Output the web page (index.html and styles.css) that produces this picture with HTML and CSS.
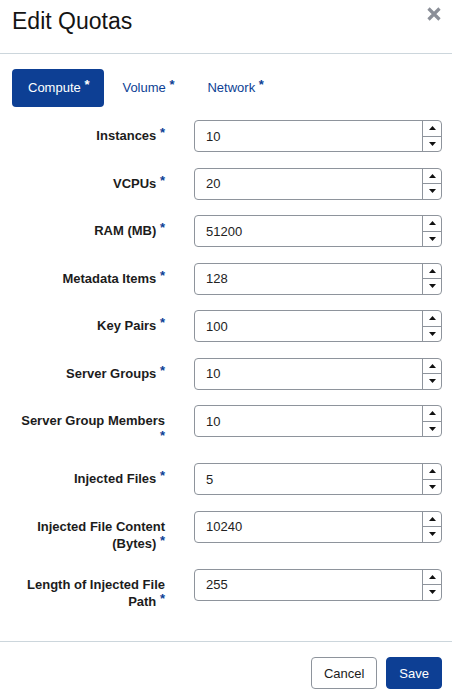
FILE: index.html
```html
<!DOCTYPE html>
<html>
<head>
<meta charset="utf-8">
<link rel="stylesheet" href="styles.css">
</head>
<body>
<div class="modal">
  <div class="header">
    <h1 class="title">Edit Quotas</h1>
    <svg class="close" width="14" height="14" viewBox="0 0 14 14"><path d="M1.5 1.5 L12.5 12.5 M12.5 1.5 L1.5 12.5" stroke="#8b8f98" stroke-width="3.2" fill="none"/></svg>
  </div>
  <div class="body">
    <div class="tabs">
      <div class="tab active">Compute <span class="req">*</span></div>
      <div class="tab">Volume <span class="req">*</span></div>
      <div class="tab">Network <span class="req">*</span></div>
    </div>
    <div class="form">
      <div class="label">Instances <span class="req">*</span></div>
      <div class="field"><span class="val">10</span><span class="spin"><span class="up"><svg width="7" height="4"><polygon points="0,4 7,4 3.5,0"/></svg></span><span class="down"><svg width="7" height="4"><polygon points="0,0 7,0 3.5,4"/></svg></span></span></div>

      <div class="label">VCPUs <span class="req">*</span></div>
      <div class="field"><span class="val">20</span><span class="spin"><span class="up"><svg width="7" height="4"><polygon points="0,4 7,4 3.5,0"/></svg></span><span class="down"><svg width="7" height="4"><polygon points="0,0 7,0 3.5,4"/></svg></span></span></div>

      <div class="label">RAM (MB) <span class="req">*</span></div>
      <div class="field"><span class="val">51200</span><span class="spin"><span class="up"><svg width="7" height="4"><polygon points="0,4 7,4 3.5,0"/></svg></span><span class="down"><svg width="7" height="4"><polygon points="0,0 7,0 3.5,4"/></svg></span></span></div>

      <div class="label">Metadata Items <span class="req">*</span></div>
      <div class="field"><span class="val">128</span><span class="spin"><span class="up"><svg width="7" height="4"><polygon points="0,4 7,4 3.5,0"/></svg></span><span class="down"><svg width="7" height="4"><polygon points="0,0 7,0 3.5,4"/></svg></span></span></div>

      <div class="label">Key Pairs <span class="req">*</span></div>
      <div class="field"><span class="val">100</span><span class="spin"><span class="up"><svg width="7" height="4"><polygon points="0,4 7,4 3.5,0"/></svg></span><span class="down"><svg width="7" height="4"><polygon points="0,0 7,0 3.5,4"/></svg></span></span></div>

      <div class="label">Server Groups <span class="req">*</span></div>
      <div class="field"><span class="val">10</span><span class="spin"><span class="up"><svg width="7" height="4"><polygon points="0,4 7,4 3.5,0"/></svg></span><span class="down"><svg width="7" height="4"><polygon points="0,0 7,0 3.5,4"/></svg></span></span></div>

      <div class="label">Server Group Members <span class="req">*</span></div>
      <div class="field"><span class="val">10</span><span class="spin"><span class="up"><svg width="7" height="4"><polygon points="0,4 7,4 3.5,0"/></svg></span><span class="down"><svg width="7" height="4"><polygon points="0,0 7,0 3.5,4"/></svg></span></span></div>

      <div class="label">Injected Files <span class="req">*</span></div>
      <div class="field"><span class="val">5</span><span class="spin"><span class="up"><svg width="7" height="4"><polygon points="0,4 7,4 3.5,0"/></svg></span><span class="down"><svg width="7" height="4"><polygon points="0,0 7,0 3.5,4"/></svg></span></span></div>

      <div class="label">Injected File Content (Bytes) <span class="req">*</span></div>
      <div class="field"><span class="val">10240</span><span class="spin"><span class="up"><svg width="7" height="4"><polygon points="0,4 7,4 3.5,0"/></svg></span><span class="down"><svg width="7" height="4"><polygon points="0,0 7,0 3.5,4"/></svg></span></span></div>

      <div class="label">Length of Injected File Path <span class="req">*</span></div>
      <div class="field"><span class="val">255</span><span class="spin"><span class="up"><svg width="7" height="4"><polygon points="0,4 7,4 3.5,0"/></svg></span><span class="down"><svg width="7" height="4"><polygon points="0,0 7,0 3.5,4"/></svg></span></span></div>
    </div>
  </div>
  <div class="footer">
    <button class="btn cancel">Cancel</button>
    <button class="btn save">Save</button>
  </div>
</div>
</body>
</html>
```

FILE: styles.css
```css
* { box-sizing: border-box; }
html, body { margin: 0; padding: 0; background: #fff; }
body {
  font-family: "Liberation Sans", Arial, sans-serif;
  font-size: 13px;
  color: #1c1c1c;
}
.modal { width: 452px; }
.header {
  height: 54px;
  border-bottom: 1px solid #ccd6dc;
  display: flex;
  align-items: flex-start;
  justify-content: space-between;
  padding: 9px 11px 0 12px;
}
.title {
  margin: 0;
  font-size: 23px;
  font-weight: normal;
  line-height: 25px;
  color: #141414;
}
.close { margin-top: -2px; display: block; }
.body { padding: 15px 10px 30px 12px; }
.tabs { display: flex; gap: 2px; }
.tab {
  height: 38px;
  line-height: 38px;
  padding: 0 15px 0 16px;
  border-radius: 4px;
  color: #0d3f94;
  white-space: nowrap;
}
.tab.active { background: #0d3f94; color: #fff; }
.tab .req { color: inherit; }
.req {
  color: #0d3f94;
  font-weight: bold;
  font-size: 13px;
  line-height: 0;
  vertical-align: 3px;
}
.form {
  margin-top: 13px;
  padding-left: 8px;
  display: grid;
  grid-template-columns: 145px 248px;
  column-gap: 29px;
  row-gap: 15.5px;
  align-items: start;
}
.label {
  text-align: right;
  font-weight: bold;
  padding-top: 7px;
  line-height: 17.75px;
  color: #1c1c1c;
}
.field {
  height: 32px;
  border: 1px solid #8e949c;
  border-radius: 4px;
  display: flex;
  align-items: stretch;
  background: #fff;
}
.val {
  flex: 1;
  display: flex;
  align-items: center;
  padding-left: 11px;
  color: #222;
}
.spin {
  width: 19px;
  border-left: 1px solid #8e949c;
  display: flex;
  flex-direction: column;
}
.spin .up, .spin .down {
  flex: 1;
  display: flex;
  align-items: center;
  justify-content: center;
}
.spin .up { border-bottom: 1px solid #8e949c; }
.spin svg { display: block; fill: #111; }
.footer {
  border-top: 1px solid #ccd6dc;
  padding: 15px 10px 9px;
  display: flex;
  justify-content: flex-end;
  gap: 9px;
}
.btn {
  font-family: "Liberation Sans", Arial, sans-serif;
  font-size: 13px;
  height: 32px;
  border-radius: 4px;
  padding: 0 12px;
  cursor: pointer;
}
.cancel { background: #fff; border: 1px solid #8e949c; color: #1c1c1c; }
.save { background: #0d3f94; border: 1px solid #0d3f94; color: #fff; padding: 0 12px; }
```
